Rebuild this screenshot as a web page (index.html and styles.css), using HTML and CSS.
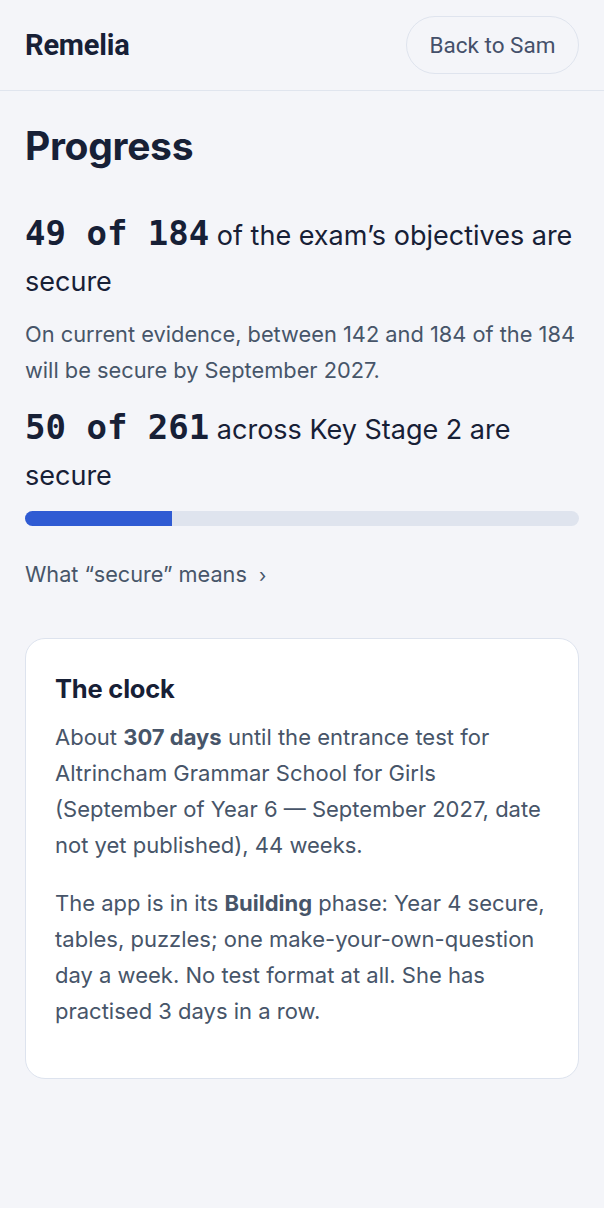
FILE: index.html
```html
<!DOCTYPE html>
<html lang="en">
<head>
<meta charset="utf-8">
<title>Remelia – Progress</title>
<link rel="stylesheet" href="styles.css">
</head>
<body>
<header class="topbar">
  <div class="brand">Remelia</div>
  <a class="back" href="#">Back to Sam</a>
</header>
<main class="page">
  <h1 class="title">Progress</h1>
  <p class="stat stat-first"><span class="num">49 of 184</span> of the exam’s objectives are secure</p>
  <p class="note">On current evidence, between 142 and 184 of the 184 will be secure by September 2027.</p>
  <p class="stat stat-second"><span class="num">50 of 261</span> across Key Stage 2 are secure</p>
  <div class="bar"><div class="fill" style="width: 26.6%"></div></div>
  <a class="more" href="#">What “secure” means <span class="chev">›</span></a>
  <section class="card">
    <h2 class="card-title">The clock</h2>
    <p class="card-text">About <b>307 days</b> until the entrance test for Altrincham Grammar School for Girls (September of Year 6 — September 2027, date not yet published), 44 weeks.</p>
    <p class="card-text">The app is in its <b>Building</b> phase: Year 4 secure, tables, puzzles; one make-your-own-question day a week. No test format at all. She has practised 3 days in a row.</p>
  </section>
</main>
</body>
</html>
```

FILE: styles.css
```css
* { box-sizing: border-box; }
html, body { margin: 0; padding: 0; }
body {
  background: #f4f5f9;
  font-family: Inter, "Noto Sans", sans-serif;
  color: #172036;
  width: 604px;
  min-height: 1208px;
}
.topbar {
  height: 91px;
  display: flex;
  align-items: center;
  justify-content: space-between;
  padding: 0 25px;
  border-bottom: 1px solid #e0e5ee;
}
.brand {
  font-family: Roboto, Inter, sans-serif;
  font-weight: 700;
  font-size: 29px;
  color: #172036;
  letter-spacing: -0.2px;
}
.back {
  display: flex;
  align-items: center;
  justify-content: center;
  width: 173px;
  height: 58px;
  border: 1px solid #dfe4ee;
  border-radius: 29px;
  font-family: Roboto, Inter, sans-serif;
  font-size: 22.5px;
  color: #44506a;
  text-decoration: none;
  margin-top: -1px;
}
.page {
  padding: 0 25px;
}
.title {
  margin: 33px 0 0;
  font-size: 39px;
  line-height: 44px;
  font-weight: 700;
  letter-spacing: -0.3px;
  color: #172036;
}
.stat {
  margin: 0;
  font-size: 27px;
  line-height: 46px;
  color: #172036;
}
.stat-first { margin-top: 45px; }
.stat-second { margin-top: 19px; }
.num {
  font-family: "DejaVu Sans Mono", monospace;
  font-weight: 700;
  font-size: 34px;
  line-height: 1;
}
.note {
  margin: 11px 0 0;
  font-size: 21.8px;
  line-height: 36px;
  color: #475569;
}
.bar {
  margin-top: 12px;
  height: 15px;
  background: #dfe4ee;
  border-radius: 8px;
  overflow: hidden;
}
.fill {
  height: 100%;
  background: #2f5bd3;
}
.more {
  display: inline-block;
  margin-top: 30px;
  font-size: 21.7px;
  line-height: 36px;
  color: #475569;
  text-decoration: none;
}
.chev { margin-left: 6px; font-size: 19px; }
.card {
  margin-top: 44px;
  background: #fff;
  border: 1px solid #dde3ee;
  border-radius: 20px;
  padding: 33px 29px 49px;
}
.card-title {
  margin: 0;
  font-size: 25.5px;
  line-height: 34px;
  font-weight: 700;
  letter-spacing: -0.2px;
  color: #172036;
}
.card-text {
  margin: 13px 0 0;
  font-size: 22px;
  line-height: 36px;
  color: #475569;
}
.card-text + .card-text { margin-top: 22px; }
.card-text b { font-weight: 700; }
```
